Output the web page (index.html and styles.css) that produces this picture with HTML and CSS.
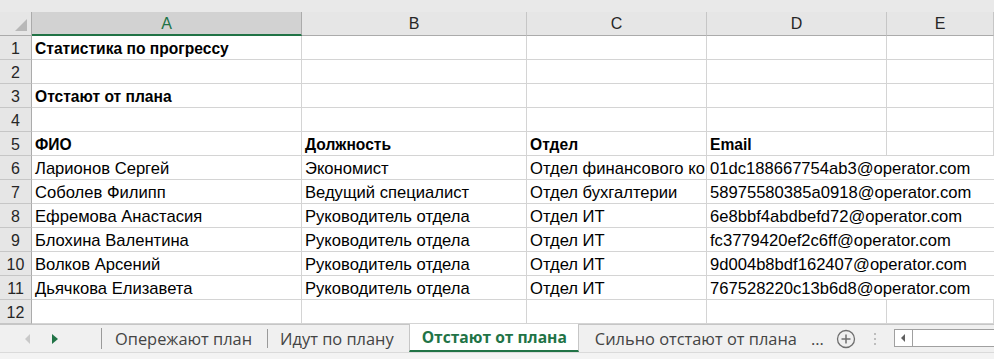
FILE: index.html
```html
<!DOCTYPE html>
<html lang="ru">
<head>
  <meta charset="UTF-8">
  <title>Отстают от плана</title>
  <link rel="stylesheet" href="styles.css">
</head>
<body>
  <div class="top-strip"></div>
  <div class="sheet">
    <div class="corner"><span class="tri"></span></div>
    <div class="colhead active">A</div>
    <div class="colhead">B</div>
    <div class="colhead">C</div>
    <div class="colhead">D</div>
    <div class="colhead">E</div>

    <div class="rownum">1</div>
    <div class="cell bold">Статистика по прогрессу</div>
    <div class="cell"></div><div class="cell"></div><div class="cell"></div><div class="cell"></div>

    <div class="rownum">2</div>
    <div class="cell"></div><div class="cell"></div><div class="cell"></div><div class="cell"></div><div class="cell"></div>

    <div class="rownum">3</div>
    <div class="cell bold">Отстают от плана</div>
    <div class="cell"></div><div class="cell"></div><div class="cell"></div><div class="cell"></div>

    <div class="rownum">4</div>
    <div class="cell"></div><div class="cell"></div><div class="cell"></div><div class="cell"></div><div class="cell"></div>

    <div class="rownum">5</div>
    <div class="cell bold">ФИО</div>
    <div class="cell bold">Должность</div>
    <div class="cell bold">Отдел</div>
    <div class="cell bold">Email</div>
    <div class="cell"></div>

    <div class="rownum">6</div>
    <div class="cell">Ларионов Сергей</div>
    <div class="cell">Экономист</div>
    <div class="cell">Отдел финансового ко</div>
    <div class="cell wide">01dc188667754ab3@operator.com</div>

    <div class="rownum">7</div>
    <div class="cell">Соболев Филипп</div>
    <div class="cell">Ведущий специалист</div>
    <div class="cell">Отдел бухгалтерии</div>
    <div class="cell wide">58975580385a0918@operator.com</div>

    <div class="rownum">8</div>
    <div class="cell">Ефремова Анастасия</div>
    <div class="cell">Руководитель отдела</div>
    <div class="cell">Отдел ИТ</div>
    <div class="cell wide">6e8bbf4abdbefd72@operator.com</div>

    <div class="rownum">9</div>
    <div class="cell">Блохина Валентина</div>
    <div class="cell">Руководитель отдела</div>
    <div class="cell">Отдел ИТ</div>
    <div class="cell wide">fc3779420ef2c6ff@operator.com</div>

    <div class="rownum">10</div>
    <div class="cell">Волков Арсений</div>
    <div class="cell">Руководитель отдела</div>
    <div class="cell">Отдел ИТ</div>
    <div class="cell wide">9d004b8bdf162407@operator.com</div>

    <div class="rownum">11</div>
    <div class="cell">Дьячкова Елизавета</div>
    <div class="cell">Руководитель отдела</div>
    <div class="cell">Отдел ИТ</div>
    <div class="cell wide">767528220c13b6d8@operator.com</div>

    <div class="rownum">12</div>
    <div class="cell"></div><div class="cell"></div><div class="cell"></div><div class="cell"></div><div class="cell"></div>
  </div>

  <div class="tabbar">
    <div class="nav">
      <span class="arrow left"></span>
      <span class="arrow right"></span>
    </div>
    <div class="tab">Опережают план</div>
    <div class="tab">Идут по плану</div>
    <div class="tab current">Отстают от плана</div>
    <div class="tab last">Сильно отстают от плана</div>
    <div class="more">...</div>
    <div class="add">
      <svg width="20" height="20" viewBox="0 0 20 20">
        <circle cx="10" cy="10" r="8.5" fill="none" stroke="#6f6f6f" stroke-width="1.3"/>
        <path d="M10 5.5v9M5.5 10h9" stroke="#6f6f6f" stroke-width="1.5"/>
      </svg>
    </div>
    <div class="grip"><i></i><i></i><i></i></div>
    <div class="hscroll">
      <span class="sbtn"><span class="sarrow"></span></span>
      <span class="track"></span>
    </div>
  </div>
  <div class="bottom-strip"></div>
</body>
</html>
```

FILE: styles.css
```css
* {
  box-sizing: border-box;
}
body {
  margin: 0;
  width: 994px;
  height: 359px;
  overflow: hidden;
  font-family: "Open Sans", "Liberation Sans", sans-serif;
  background: #fff;
}
.top-strip {
  height: 12px;
  background: #e9e9e9;
}
.sheet {
  display: grid;
  grid-template-columns: 32px 270px 225px 180px 180px 107px;
  grid-template-rows: 24px repeat(12, 24px);
  font-family: "Liberation Sans", Arial, sans-serif;
  font-size: 16.6px;
  color: #000;
}
.corner {
  position: relative;
  background: #e6e6e6;
  border-right: 1px solid #ababab;
  border-bottom: 1px solid #ababab;
}
.tri {
  position: absolute;
  right: 4px;
  bottom: 4px;
  width: 0;
  height: 0;
  border-left: 12px solid transparent;
  border-bottom: 12px solid #b8b8b8;
}
.colhead {
  background: #e6e6e6;
  border-right: 1px solid #c6c6c6;
  border-bottom: 1px solid #ababab;
  text-align: center;
  line-height: 24px;
  font-size: 16px;
  color: #262626;
}
.colhead.active {
  background: #d2d2d2;
  color: #217346;
  border-bottom: 2px solid #217346;
  border-right-color: #ababab;
}
.rownum {
  background: #e6e6e6;
  border-right: 1px solid #ababab;
  border-bottom: 1px solid #c6c6c6;
  text-align: center;
  line-height: 25px;
  font-size: 16px;
  color: #262626;
}
.cell {
  border-right: 1px solid #d4d4d4;
  border-bottom: 1px solid #d4d4d4;
  padding: 0 3px;
  line-height: 25px;
  white-space: nowrap;
  overflow: hidden;
}
.cell.wide {
  grid-column: span 2;
  border-right: none;
}
.bold {
  font-weight: bold;
  font-size: 15.6px;
}
.tabbar {
  display: flex;
  align-items: stretch;
  height: 28px;
  background: #f0f0f0;
  border-top: 1px solid #c6c6c6;
  font-family: "Open Sans", "Liberation Sans", sans-serif;
  font-size: 16.4px;
  color: #444;
}
.nav {
  display: flex;
  align-items: center;
  gap: 22px;
  width: 102px;
  padding-left: 25px;
  border-right: 1px solid #9a9a9a;
  margin: 3px 0;
}
.arrow {
  width: 0;
  height: 0;
  border-top: 5px solid transparent;
  border-bottom: 5px solid transparent;
}
.arrow.left {
  border-right: 5px solid #c9c9c9;
}
.arrow.right {
  border-left: 6px solid #217346;
}
.tab {
  display: flex;
  align-items: center;
  padding: 0 15px 0 13px;
  position: relative;
  white-space: nowrap;
}
.tab + .tab::before {
  content: "";
  position: absolute;
  left: 0;
  top: 4px;
  bottom: 4px;
  border-left: 1px solid #9a9a9a;
}
.tab.current {
  background: #fff;
  color: #217346;
  font-weight: bold;
  font-size: 15.6px;
  padding: 0 11px 0 12px;
  margin-top: -1px;
  border-left: 1px solid #c6c6c6;
  border-right: 1px solid #c6c6c6;
  border-bottom: 2px solid #217346;
}
.tab.current::before,
.tab.current + .tab::before {
  display: none;
}
.tab.last {
  padding: 0 12px 0 16px;
}
.more {
  display: flex;
  align-items: center;
  padding: 0 8px 0 2px;
  color: #444;
}
.add {
  display: flex;
  align-items: center;
  padding: 0 4px;
}
.grip {
  display: flex;
  flex-direction: column;
  justify-content: center;
  gap: 3px;
  width: 30px;
  align-items: center;
}
.grip i {
  display: block;
  width: 2px;
  height: 2px;
  background: #bdbdbd;
}
.hscroll {
  display: flex;
  flex: 1;
  margin: 4px 0 5px 4px;
  border: 1px solid #a0a0a0;
  border-right: none;
  background: #fff;
}
.sbtn {
  width: 18px;
  border-right: 1px solid #a0a0a0;
  display: flex;
  align-items: center;
  justify-content: center;
}
.sarrow {
  width: 0;
  height: 0;
  border-top: 4px solid transparent;
  border-bottom: 4px solid transparent;
  border-right: 4px solid #606060;
}
.track {
  flex: 1;
}
.bottom-strip {
  height: 8px;
  background: #f3f3f3;
  border-top: 1px solid #dadada;
}
```
